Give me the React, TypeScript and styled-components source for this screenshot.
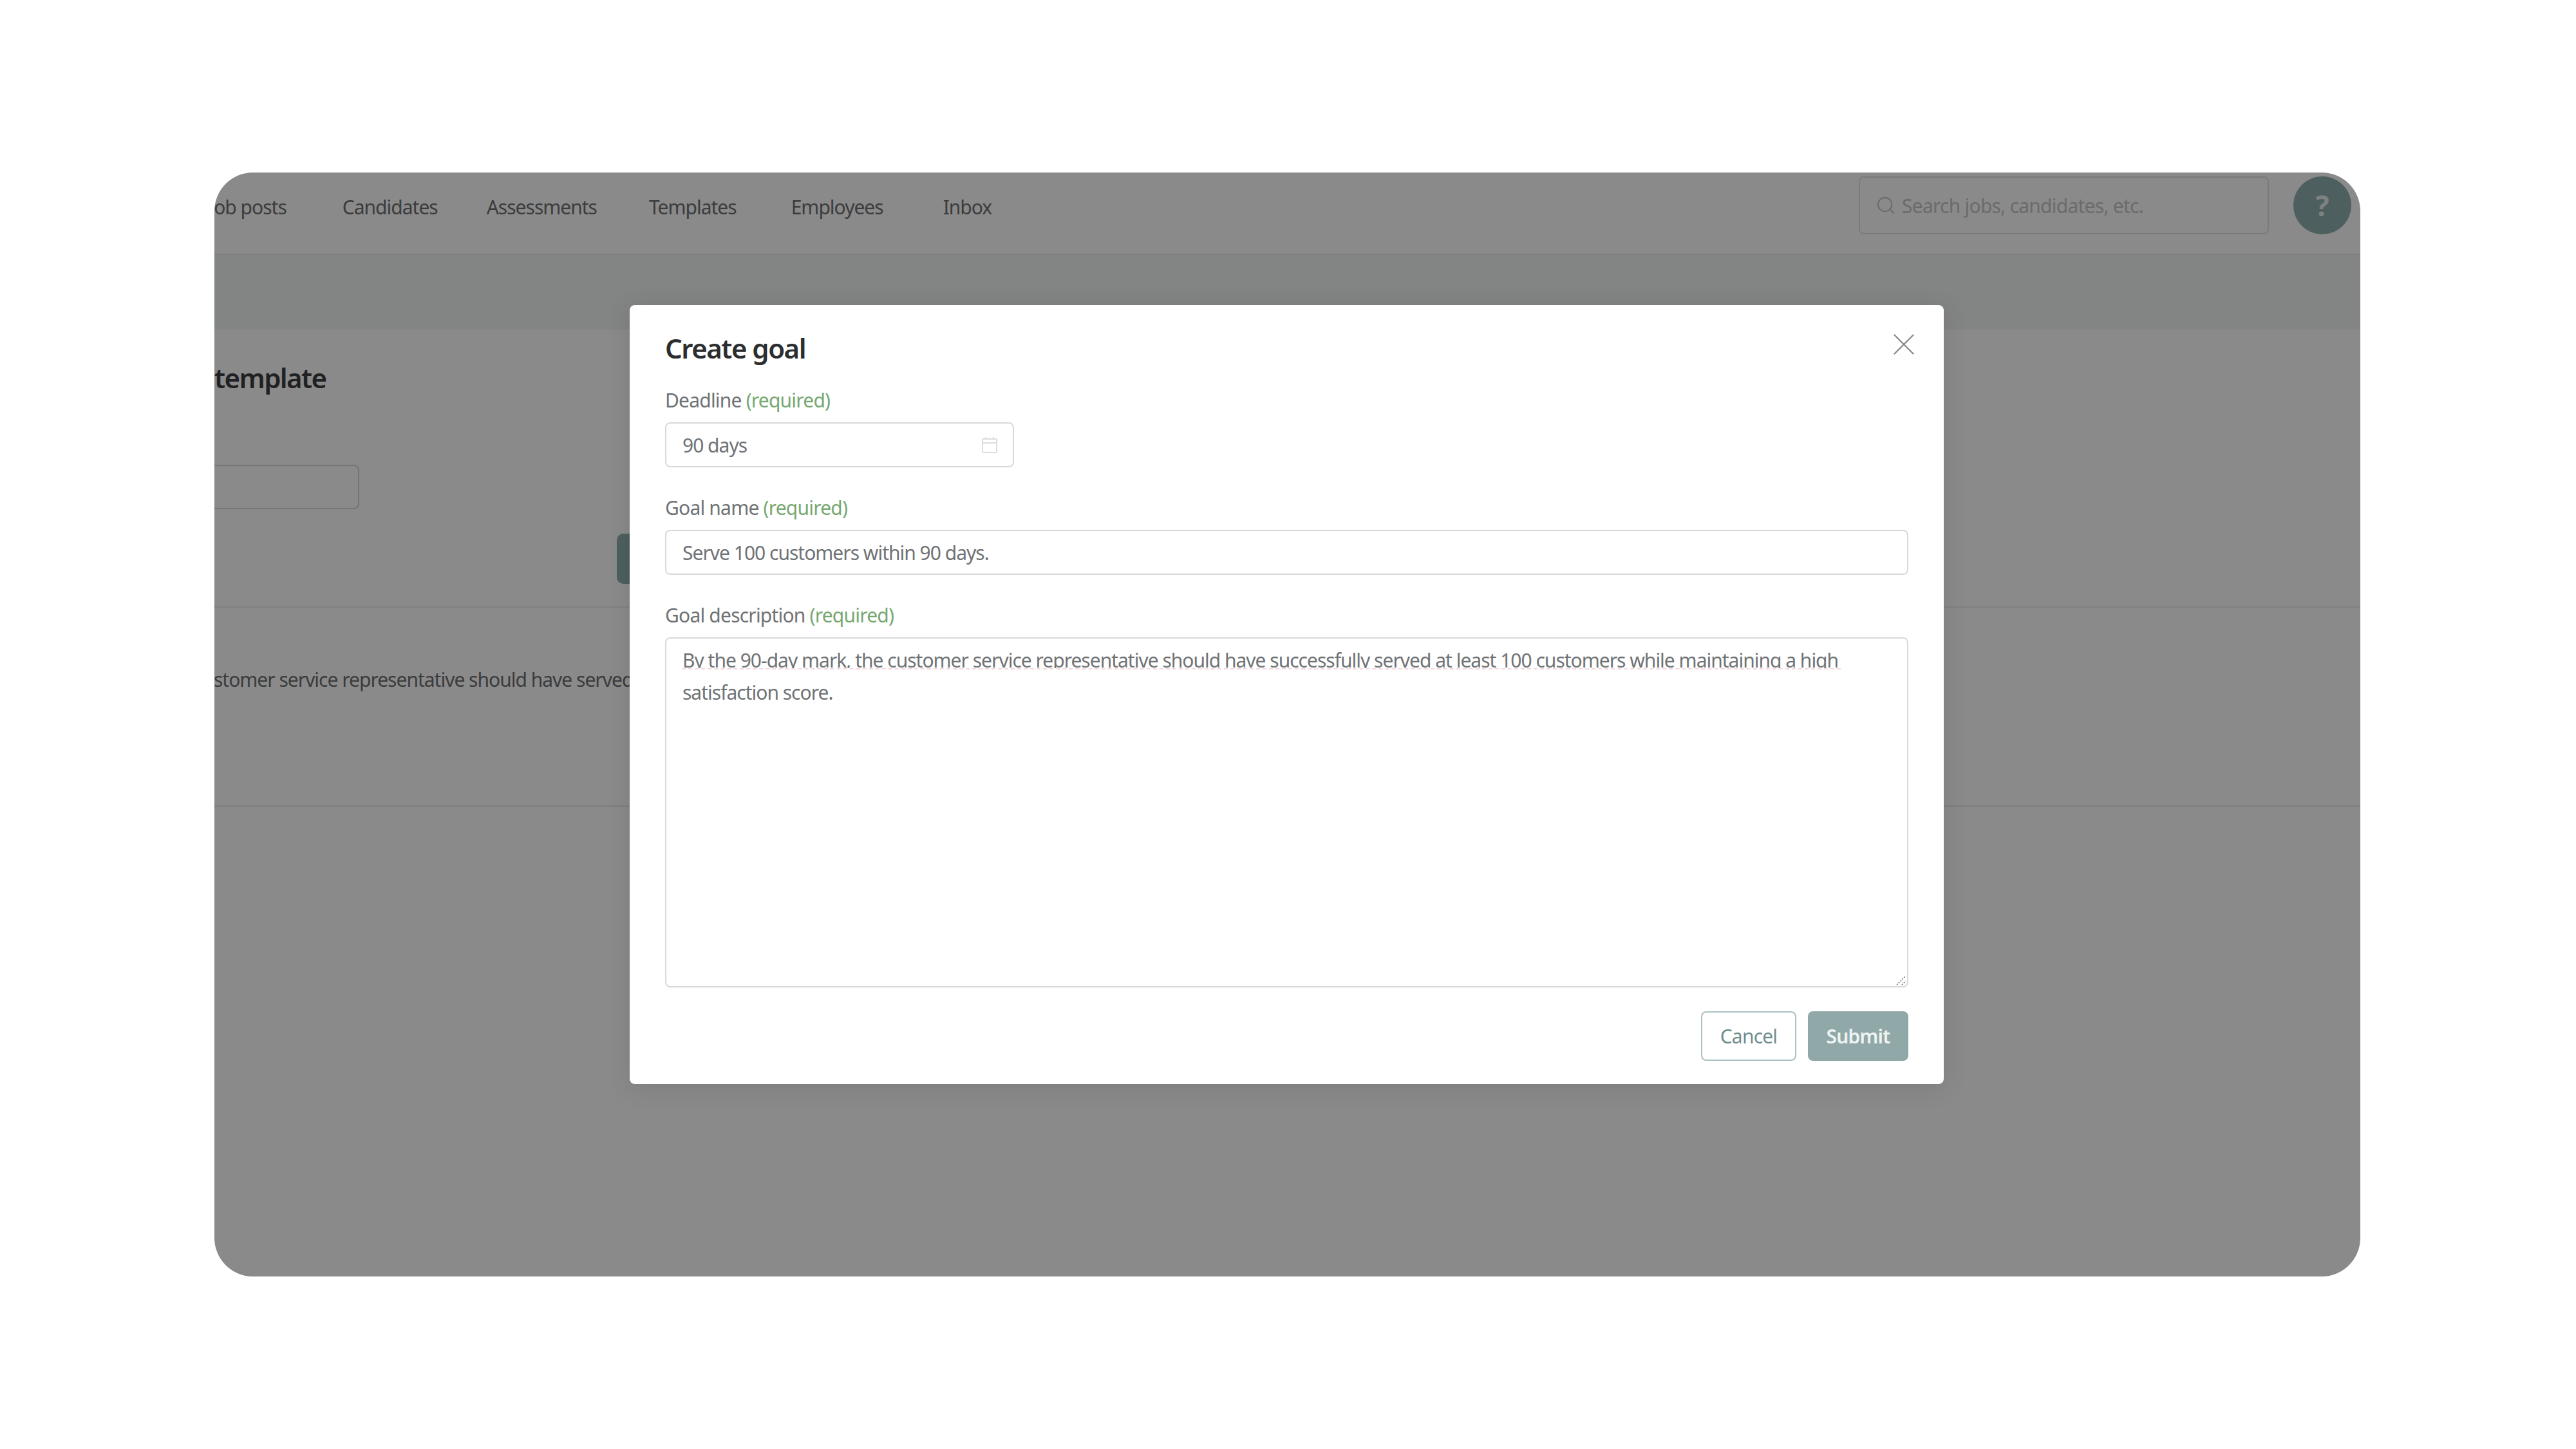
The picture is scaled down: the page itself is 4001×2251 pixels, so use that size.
import styled, { createGlobalStyle } from "styled-components";
import { Search, X } from "lucide-react";

const GlobalStyle = createGlobalStyle`
  html, body {
    margin: 0;
    background: #fff;
  }
  * {
    box-sizing: border-box;
  }
  body {
    font-family: "Noto Sans", "Liberation Sans", sans-serif;
    font-stretch: 87.5%;
  }
`;

const Frame = styled.div`
  position: relative;
  width: 3333px;
  height: 1715px;
  margin: 268px 0 0 333px;
  border-radius: 60px;
  overflow: hidden;
  background: #fff;
`;

const Nav = styled.header`
  display: flex;
  height: 128px;
  padding: 6px 14px 0 0;
  border-bottom: 2px solid #ebebeb;
`;

const NavLink = styled.a<{ $gap: number }>`
  margin-left: ${(p) => p.$gap}px;
  padding-top: 28px;
  font-size: 30px;
  line-height: 40px;
  letter-spacing: -1px;
  color: #6d7072;
  white-space: nowrap;
`;

const SearchBox = styled.div`
  display: flex;
  align-items: center;
  gap: 9px;
  width: 637px;
  height: 90px;
  margin-left: auto;
  padding-left: 24px;
  border: 2px solid #e2e2e2;
  border-radius: 8px;
  font-size: 30px;
  letter-spacing: -0.75px;
  color: #c6c6c6;
`;

const HelpButton = styled.div`
  display: flex;
  align-items: center;
  justify-content: center;
  width: 90px;
  height: 90px;
  margin-left: 38px;
  border-radius: 50%;
  background: #8fb0ae;
  font-size: 44px;
  font-weight: 700;
  color: #e8efee;
`;

const Band = styled.div`
  height: 116px;
  background: #f1f6f3;
`;

const PageTitle = styled.h1`
  margin: 0;
  padding-top: 45px;
  font-size: 42px;
  line-height: 60px;
  font-weight: 600;
  letter-spacing: -1.6px;
  color: #3d3e42;
`;

const GhostInput = styled.div`
  width: 225px;
  height: 69px;
  margin-top: 105px;
  border: 2px solid #d8d8d8;
  border-left: none;
  border-radius: 0 8px 8px 0;
`;

const ActionRow = styled.div`
  height: 153px;
  padding: 38px 0 0 625px;
  border-bottom: 2px solid #ededed;
`;

const ActionButton = styled.div`
  width: 160px;
  height: 78px;
  border-radius: 10px;
  background: #8fb0ae;
`;

const GoalRow = styled.div`
  height: 310px;
  padding-top: 92px;
  border-bottom: 3px solid #ededed;
`;

const GoalText = styled.p`
  margin: 0 0 0 -32px;
  font-size: 30px;
  line-height: 40px;
  letter-spacing: -1px;
  color: #6d7072;
  white-space: nowrap;
`;

const Scrim = styled.div`
  position: absolute;
  inset: 0;
  display: flex;
  justify-content: center;
  padding: 206px 2px 0 0;
  background: rgba(0, 0, 0, 0.46);
`;

const Modal = styled.div`
  position: relative;
  display: flex;
  flex-direction: column;
  width: 2041px;
  height: 1210px;
  padding: 37px 55px 36px;
  border-radius: 8px;
  background: #fff;
  box-shadow: 0 6px 40px rgba(0, 0, 0, 0.1);
`;

const CloseButton = styled.button`
  position: absolute;
  top: 32px;
  right: 33px;
  display: flex;
  padding: 0;
  border: none;
  background: none;
  color: #8b8b8b;
`;

const ModalTitle = styled.h2`
  margin: 0 0 31px;
  font-size: 42px;
  line-height: 60px;
  font-weight: 600;
  letter-spacing: -1.5px;
  color: #2b2d2f;
`;

const Field = styled.div`
  display: flex;
  flex-direction: column;
  margin-bottom: 43px;
`;

const Label = styled.label`
  height: 40px;
  margin-bottom: 14px;
  font-size: 30px;
  line-height: 40px;
  letter-spacing: -0.8px;
  color: #6f7375;
`;

const Required = styled.span`
  color: #77a871;
`;

const InputBox = styled.div<{ $narrow?: boolean }>`
  display: flex;
  align-items: center;
  justify-content: space-between;
  width: ${(p) => (p.$narrow ? "542px" : "100%")};
  height: 70px;
  padding: 0 24px 0 25px;
  border: 2px solid #d9d9d9;
  border-radius: 8px;
  font-size: 30px;
  letter-spacing: -1px;
  color: #6f7375;
`;

const AreaWrap = styled.div`
  position: relative;
`;

const TextArea = styled.textarea`
  display: block;
  width: 100%;
  height: 544px;
  padding: 9px 25px;
  border: 2px solid #d9d9d9;
  border-radius: 8px;
  outline: none;
  resize: none;
  font-family: inherit;
  font-stretch: inherit;
  font-size: 30px;
  line-height: 50px;
  letter-spacing: -1px;
  color: #6f7375;
`;

const SpellMark = styled.div`
  position: absolute;
  top: 48px;
  left: 26px;
  width: 1800px;
  height: 6px;
  border-top: 2px dashed #f6d9dc;
  background: #fff;
`;

const ResizeGrip = styled.svg`
  position: absolute;
  right: 3px;
  bottom: 3px;
`;

const Footer = styled.div`
  display: flex;
  justify-content: flex-end;
  gap: 18px;
  margin-top: -6px;
`;

const Button = styled.button<{ $primary?: boolean }>`
  width: ${(p) => (p.$primary ? "156px" : "148px")};
  height: 77px;
  padding: 0;
  border: 2px solid ${(p) => (p.$primary ? "#91a8a8" : "#a9c1c1")};
  border-radius: 8px;
  background: ${(p) => (p.$primary ? "#91a8a8" : "#fff")};
  font-family: inherit;
  font-stretch: inherit;
  font-size: 30px;
  font-weight: ${(p) => (p.$primary ? 600 : 400)};
  letter-spacing: -0.8px;
  color: ${(p) => (p.$primary ? "#eef3f3" : "#6f8d8d")};
`;

const navItems = [
  { label: "Job posts", gap: -8 },
  { label: "Candidates", gap: 87 },
  { label: "Assessments", gap: 76 },
  { label: "Templates", gap: 81 },
  { label: "Employees", gap: 85 },
  { label: "Inbox", gap: 93 },
];

const CalendarIcon = () => (
  <svg width="24" height="26" viewBox="0 0 24 26" fill="none" stroke="#dcdcdc" strokeWidth="2">
    <rect x="1" y="4" width="22" height="21" rx="1" />
    <path d="M1 10h22M6 1v3M18 1v3" />
  </svg>
);

const App = () => {
  return (
    <>
      <GlobalStyle />
      <Frame>
        <Nav>
          {navItems.map((item) => (
            <NavLink key={item.label} $gap={item.gap}>
              {item.label}
            </NavLink>
          ))}
          <SearchBox>
            <Search size={32} strokeWidth={1.4} color="#c4c4c4" />
            Search jobs, candidates, etc.
          </SearchBox>
          <HelpButton>?</HelpButton>
        </Nav>
        <Band />
        <PageTitle>template</PageTitle>
        <GhostInput />
        <ActionRow>
          <ActionButton />
        </ActionRow>
        <GoalRow>
          <GoalText>customer service representative should have served</GoalText>
        </GoalRow>
        <Scrim>
          <Modal>
            <CloseButton>
              <X size={58} strokeWidth={1} />
            </CloseButton>
            <ModalTitle>Create goal</ModalTitle>
            <Field>
              <Label>
                Deadline <Required>(required)</Required>
              </Label>
              <InputBox $narrow>
                90 days
                <CalendarIcon />
              </InputBox>
            </Field>
            <Field>
              <Label>
                Goal name <Required>(required)</Required>
              </Label>
              <InputBox>Serve 100 customers within 90 days.</InputBox>
            </Field>
            <Field>
              <Label>
                Goal description <Required>(required)</Required>
              </Label>
              <AreaWrap>
                <TextArea
                  spellCheck={false}
                  readOnly
                  value="By the 90-day mark, the customer service representative should have successfully served at least 100 customers while maintaining a high satisfaction score."
                />
                <SpellMark />
                <ResizeGrip width="16" height="16" viewBox="0 0 16 16" stroke="#666" strokeWidth="1.5" strokeDasharray="2 2">
                  <path d="M1 15 15 1M9 15 15 9" />
                </ResizeGrip>
              </AreaWrap>
            </Field>
            <Footer>
              <Button>Cancel</Button>
              <Button $primary>Submit</Button>
            </Footer>
          </Modal>
        </Scrim>
      </Frame>
    </>
  );
};

export default App;
